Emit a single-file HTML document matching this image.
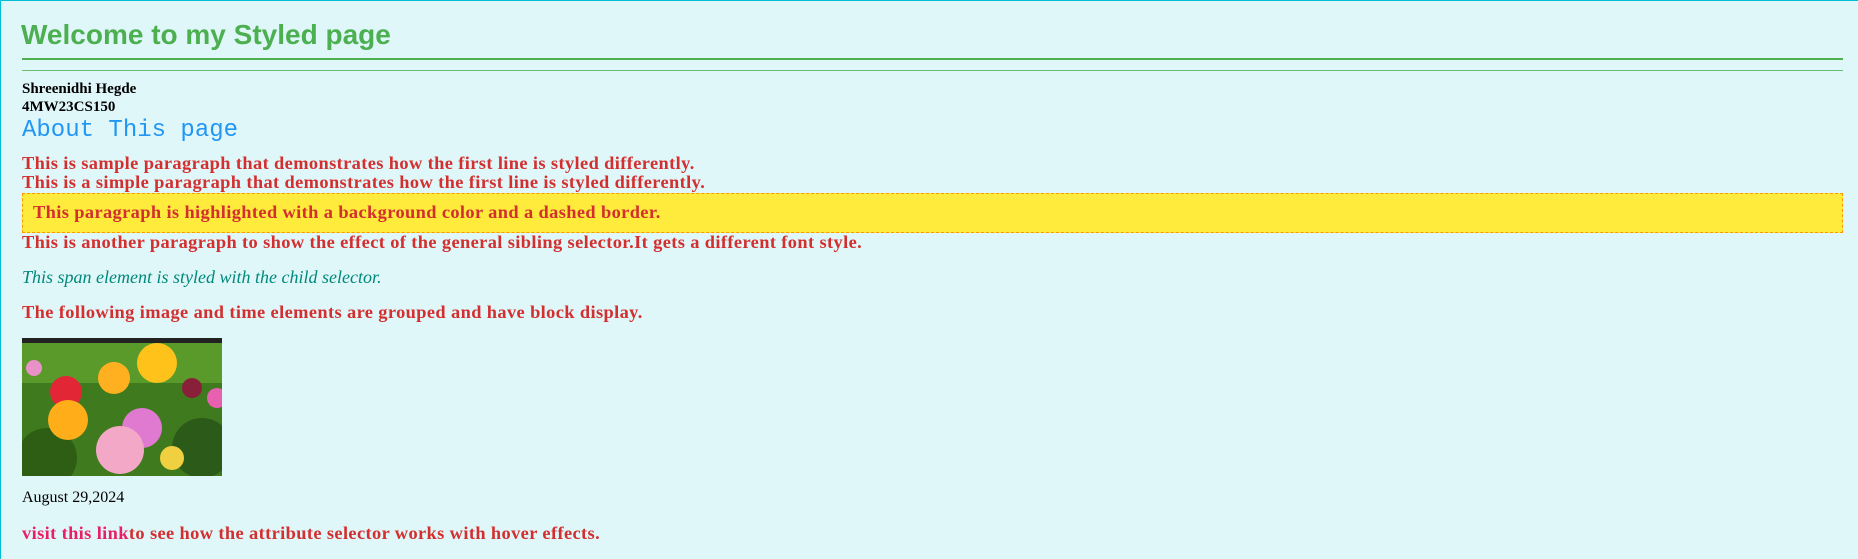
<!DOCTYPE html>
<html><head><meta charset="utf-8"><style>
html,body{margin:0;padding:0}
body{width:1858px;height:559px;background:#e0f7fa;position:relative;overflow:hidden;border-top:1px solid #00bcd4;border-left:1px solid #00bcd4;box-sizing:border-box}
.a{position:absolute;white-space:nowrap;line-height:1;margin:0}
.s{font-family:"Liberation Serif",serif}
.r{color:#d32f2f;font-weight:bold;font-size:18.4px;letter-spacing:0.38px;font-family:"Liberation Serif",serif}
</style></head><body>
<div class="a" style="left:20px;top:20px;font-family:'Liberation Sans',sans-serif;font-weight:bold;font-size:28px;color:#4caf50">Welcome to my Styled page</div>
<div class="a" style="left:21px;top:57px;width:1821px;height:2px;background:#4caf50"></div>
<div class="a" style="left:21px;top:69px;width:1821px;height:1px;background:#4caf50;opacity:.8"></div>
<div class="a s" style="left:21px;top:81px;font-size:15px;font-weight:bold">Shreenidhi Hegde</div>
<div class="a s" style="left:21px;top:99px;font-size:15px;font-weight:bold">4MW23CS150</div>
<div class="a" style="left:21px;top:118px;font-family:'Liberation Mono',monospace;font-size:24px;color:#2196f3">About This page</div>
<div class="a r" style="left:21px;top:153px">This is sample paragraph that demonstrates how the first line is styled differently.</div>
<div class="a r" style="left:21px;top:172px">This is a simple paragraph that demonstrates how the first line is styled differently.</div>
<div class="a" style="left:21px;top:192px;width:1821px;height:40px;box-sizing:border-box;background:#ffeb3b;border:1px dashed #ff9800"></div>
<div class="a r" style="left:32px;top:202px">This paragraph is highlighted with a background color and a dashed border.</div>
<div class="a r" style="left:21px;top:232px">This is another paragraph to show the effect of the general sibling selector.It gets a different font style.</div>
<div class="a s" style="left:21px;top:267px;font-size:18px;font-style:italic;color:#00897b">This span element is styled with the child selector.</div>
<div class="a r" style="left:21px;top:302px">The following image and time elements are grouped and have block display.</div>
<svg class="a" style="left:21px;top:337px" width="200" height="138" viewBox="0 0 200 138">
<rect width="200" height="138" fill="#3f7a1e"/>
<rect width="200" height="5" fill="#222"/>
<rect y="5" width="200" height="40" fill="#5a9a2a"/>
<circle cx="25" cy="120" r="30" fill="#2e5e14"/>
<circle cx="180" cy="110" r="30" fill="#2c5a18"/>
<circle cx="44" cy="54" r="16" fill="#e32636"/>
<circle cx="46" cy="82" r="20" fill="#ffae1a"/>
<circle cx="135" cy="25" r="20" fill="#ffc21a"/>
<circle cx="92" cy="40" r="16" fill="#ffb020"/>
<circle cx="120" cy="90" r="20" fill="#e07ad0"/>
<circle cx="98" cy="112" r="24" fill="#f4a8c8"/>
<circle cx="150" cy="120" r="12" fill="#f0d040"/>
<circle cx="170" cy="50" r="10" fill="#8a1f3a"/>
<circle cx="12" cy="30" r="8" fill="#e890c8"/>
<circle cx="195" cy="60" r="10" fill="#e860b0"/>
</svg>
<div class="a s" style="left:21px;top:489px;font-size:16px">August 29,2024</div>
<div class="a r" style="left:21px;top:523px"><span style="color:#e91e63">visit this link</span>to see how the attribute selector works with hover effects.</div>
</body></html>
